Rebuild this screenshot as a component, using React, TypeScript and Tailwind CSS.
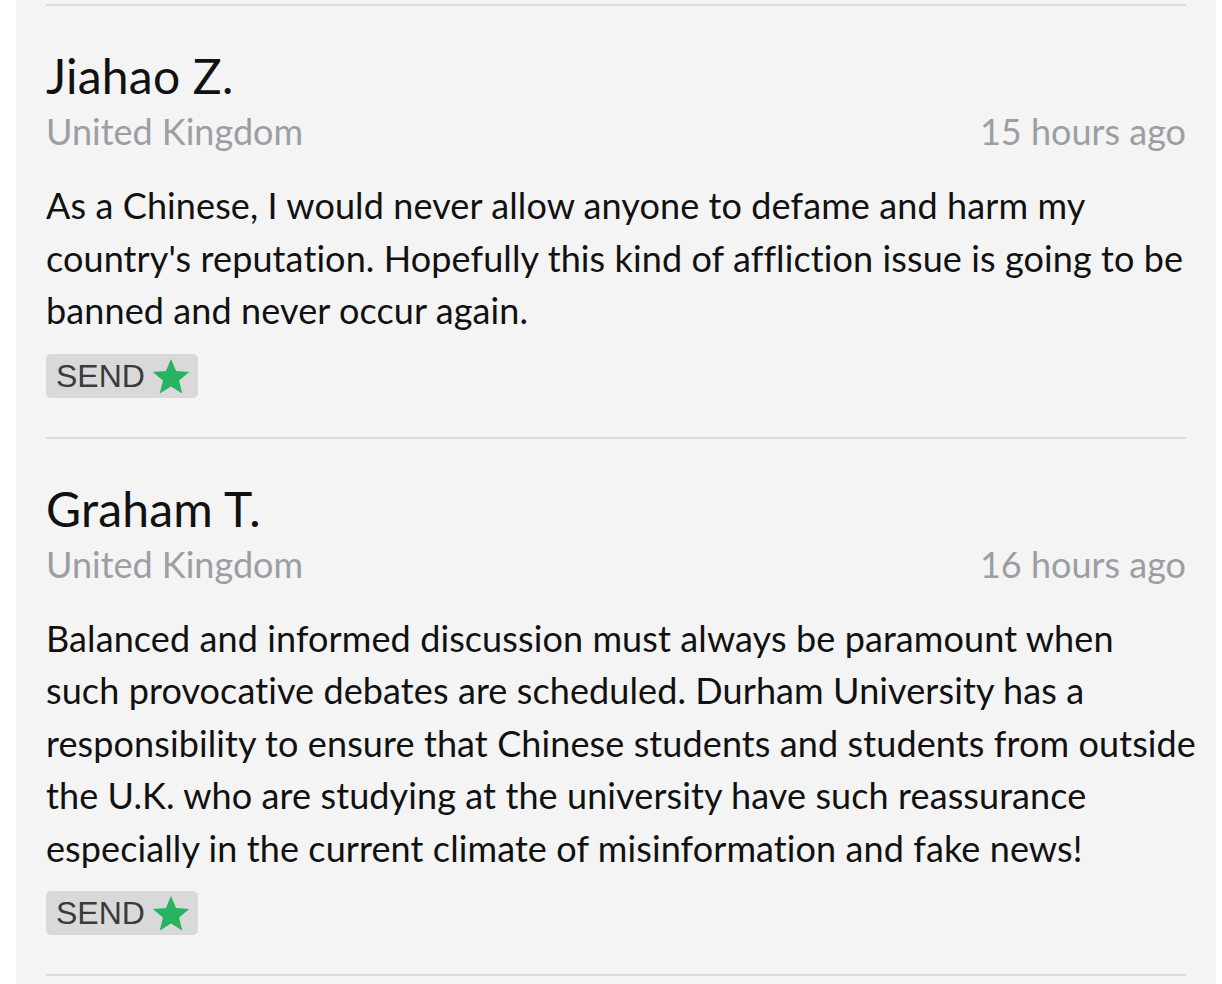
const COMMENTS = [
  {
    name: "Jiahao Z.",
    country: "United Kingdom",
    time: "15 hours ago",
    lines: [
      "As a Chinese, I would never allow anyone to defame and harm my",
      "country's reputation. Hopefully this kind of affliction issue is going to be",
      "banned and never occur again.",
    ],
  },
  {
    name: "Graham T.",
    country: "United Kingdom",
    time: "16 hours ago",
    lines: [
      "Balanced and informed discussion must always be paramount when",
      "such provocative debates are scheduled. Durham University has a",
      "responsibility to ensure that Chinese students and students from outside",
      "the U.K. who are studying at the university have such reassurance",
      "especially in the current climate of misinformation and fake news!",
    ],
  },
];

const Star = () => (
  <svg viewBox="0 0 24 24" className="w-[38px] h-[38px]" fill="#27b35f">
    <path d="M12 1.2l3.2 7.7 8.3.6-6.4 5.4 2 8.1L12 18.6 4.9 23l2-8.1L.5 9.5l8.3-.6z" />
  </svg>
);

export default function App() {
  return (
    <div className="min-h-screen bg-white font-['Lato',sans-serif]">
      <div className="ml-[16px] mr-[6px] bg-[#f4f4f4] px-[30px] pt-[4px] min-h-[984px]">
        {COMMENTS.map((c, i) => (
          <div key={i} className="border-t-2 border-[#dcdcdc] pt-[42px] pb-[39px]">
            <div className="text-[48px] leading-[56px] tracking-[0.2px] text-[#111]">{c.name}</div>
            <div className="mt-[3px] flex justify-between text-[36px] leading-[48px] text-[#9c9ea3]">
              <span>{c.country}</span>
              <span>{c.time}</span>
            </div>
            <p className="mt-[24px] text-[36px] leading-[52.5px] tracking-[0.1px] text-[#111]">
              {c.lines.map((l, j) => (
                <span key={j} className="block whitespace-nowrap">
                  {l}
                </span>
              ))}
            </p>
            <div className="mt-[17px] inline-flex h-[44px] items-center gap-[7px] rounded-[5px] bg-[#d9d9d9] pl-[10px] pr-[8px]">
              <span className="font-['Liberation_Sans',sans-serif] text-[32px] leading-none text-[#3b3b3b]">SEND</span>
              <Star />
            </div>
          </div>
        ))}
        <div className="border-t-2 border-[#dcdcdc]" />
      </div>
    </div>
  );
}
